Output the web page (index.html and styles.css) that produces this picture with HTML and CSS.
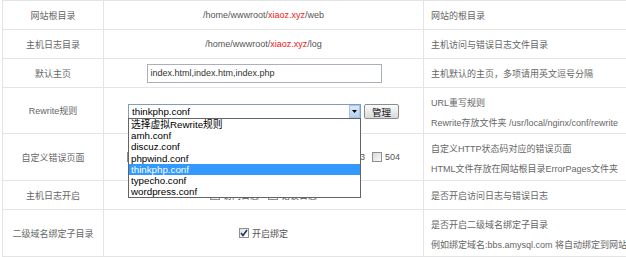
FILE: index.html
```html
<!DOCTYPE html>
<html lang="zh-CN">
<head>
<meta charset="utf-8">
<title>主机设置</title>
<link rel="stylesheet" href="styles.css">
</head>
<body>
<div class="form">
  <div class="row h29">
    <div class="label">网站根目录</div>
    <div class="field">/home/wwwroot/<span class="red">xiaoz.xyz</span>/web</div>
    <div class="desc">网站的根目录</div>
  </div>
  <div class="row h29">
    <div class="label">主机日志目录</div>
    <div class="field">/home/wwwroot/<span class="red">xiaoz.xyz</span>/log</div>
    <div class="desc">主机访问与错误日志文件目录</div>
  </div>
  <div class="row h29">
    <div class="label">默认主页</div>
    <div class="field"><div class="input">index.html,index.htm,index.php</div></div>
    <div class="desc">主机默认的主页，多项请用英文逗号分隔</div>
  </div>
  <div class="row h46">
    <div class="label">Rewrite规则</div>
    <div class="field">
      <div class="selgroup">
        <div class="select">
          <span class="seltext">thinkphp.conf</span>
          <span class="arrow"><svg width="5" height="3" viewBox="0 0 5 3"><path d="M0 0H5L2.5 3Z" fill="#000"/></svg></span>
        </div>
        <div class="btn">管理</div>
        <div class="dropdown">
          <div class="opt">选择虚拟Rewrite规则</div>
          <div class="opt">amh.conf</div>
          <div class="opt">discuz.conf</div>
          <div class="opt">phpwind.conf</div>
          <div class="opt sel">thinkphp.conf</div>
          <div class="opt">typecho.conf</div>
          <div class="opt">wordpress.conf</div>
        </div>
      </div>
    </div>
    <div class="desc two"><span>URL重写规则</span><span>Rewrite存放文件夹 /usr/local/nginx/conf/rewrite</span></div>
  </div>
  <div class="row h47">
    <div class="label">自定义错误页面</div>
    <div class="field">
      <div class="checks">
        <span class="chk"><span class="cb"></span>400</span>
        <span class="chk"><span class="cb"></span>401</span>
        <span class="chk"><span class="cb"></span>403</span>
        <span class="chk"><span class="cb"></span>404</span>
        <span class="chk"><span class="cb"></span>500</span>
        <span class="chk"><span class="cb"></span>502</span>
        <span class="chk"><span class="cb"></span>503</span>
        <span class="chk"><span class="cb"></span>504</span>
      </div>
    </div>
    <div class="desc two"><span>自定义HTTP状态码对应的错误页面</span><span>HTML文件存放在网站根目录ErrorPages文件夹</span></div>
  </div>
  <div class="row h29">
    <div class="label">主机日志开启</div>
    <div class="field">
      <div class="checks wide">
        <span class="chk"><span class="cb"></span>访问日志</span>
        <span class="chk"><span class="cb"></span>错误日志</span>
      </div>
    </div>
    <div class="desc">是否开启访问日志与错误日志</div>
  </div>
  <div class="row h47">
    <div class="label">二级域名绑定子目录</div>
    <div class="field">
      <span class="chk"><span class="cb on"><svg width="8" height="8" viewBox="0 0 8 8"><path d="M1 4L3 6.5L7 1" fill="none" stroke="#1d3461" stroke-width="1.6"/></svg></span>开启绑定</span>
    </div>
    <div class="desc two"><span>是否开启二级域名绑定子目录</span><span>例如绑定域名:bbs.amysql.com 将自动绑定到网站根目录下的bbs目录</span></div>
  </div>
</div>
</body>
</html>
```

FILE: styles.css
```css
html, body {
  margin: 0;
  padding: 0;
  background: #fff;
  overflow: hidden;
}
body {
  width: 626px;
  height: 257px;
  font-family: "Liberation Sans", "Noto Sans CJK SC", sans-serif;
  font-size: 9px;
  color: #555;
}
.form {
  margin-left: 2px;
  width: 722px;
  border-left: 1px solid #e4e4e4;
  border-top: 1px solid #e4e4e4;
}
.row {
  display: grid;
  grid-template-columns: 101px 320px 300px;
}
.h29 { height: 29px; }
.h46 { height: 46px; }
.h47 { height: 47px; }
.row > div {
  box-sizing: border-box;
  border-right: 1px solid #e4e4e4;
  border-bottom: 1px solid #e4e4e4;
  display: flex;
  align-items: center;
}
.label {
  justify-content: center;
  color: #666;
}
.field {
  justify-content: center;
  color: #555;
}
.red { color: #f02020; }
.desc {
  padding-left: 7px;
  white-space: nowrap;
  color: #666;
}
.desc.two {
  flex-direction: column;
  align-items: flex-start;
  justify-content: flex-start;
  padding-top: 5px;
  line-height: 20px;
}
.input {
  box-sizing: border-box;
  width: 235px;
  height: 19px;
  margin-left: 1px;
  border: 1px solid #a9b0bb;
  padding-left: 3px;
  color: #333;
  display: flex;
  align-items: center;
}
.selgroup {
  position: relative;
  display: flex;
  align-items: flex-start;
  gap: 3px;
  margin-top: 2px;
}
.select {
  box-sizing: border-box;
  width: 233px;
  height: 15px;
  border: 1px solid #7f9db9;
  background: #fff;
  display: flex;
  align-items: center;
  justify-content: space-between;
  font-size: 9.75px;
  color: #000;
}
.seltext { padding-left: 3px; }
.arrow {
  box-sizing: border-box;
  width: 11px;
  height: 13px;
  border: 1px solid #a8c1e6;
  background: linear-gradient(#dbe8fa, #b7d0f2);
  display: flex;
  align-items: center;
  justify-content: center;
}
.btn {
  box-sizing: border-box;
  width: 35px;
  height: 15px;
  border: 1px solid #8c8c8c;
  border-radius: 2px;
  background: linear-gradient(#fbfbfb, #dadada);
  color: #111;
  font-size: 9.5px;
  display: flex;
  align-items: center;
  justify-content: center;
}
.dropdown {
  position: absolute;
  left: 0;
  top: 14px;
  box-sizing: border-box;
  width: 233px;
  border: 1px solid #646464;
  background: #fff;
  z-index: 5;
  font-size: 9.75px;
  color: #000;
}
.opt {
  height: 11.2px;
  line-height: 11.2px;
  padding-left: 2px;
  white-space: nowrap;
}
.opt.sel {
  background: #3399ff;
  color: #fff;
}
.checks {
  display: flex;
  gap: 7px;
  align-items: center;
}
.checks.wide { gap: 9px; }
.chk {
  display: inline-flex;
  align-items: center;
  gap: 3px;
  white-space: nowrap;
}
.cb {
  box-sizing: border-box;
  width: 10px;
  height: 10px;
  border: 1px solid #8e8f8f;
  background: linear-gradient(135deg, #d8d8d8, #fafafa);
  display: inline-flex;
  align-items: center;
  justify-content: center;
}
.cb.on {
  background: linear-gradient(135deg, #e0e0e0, #ffffff);
}
```
